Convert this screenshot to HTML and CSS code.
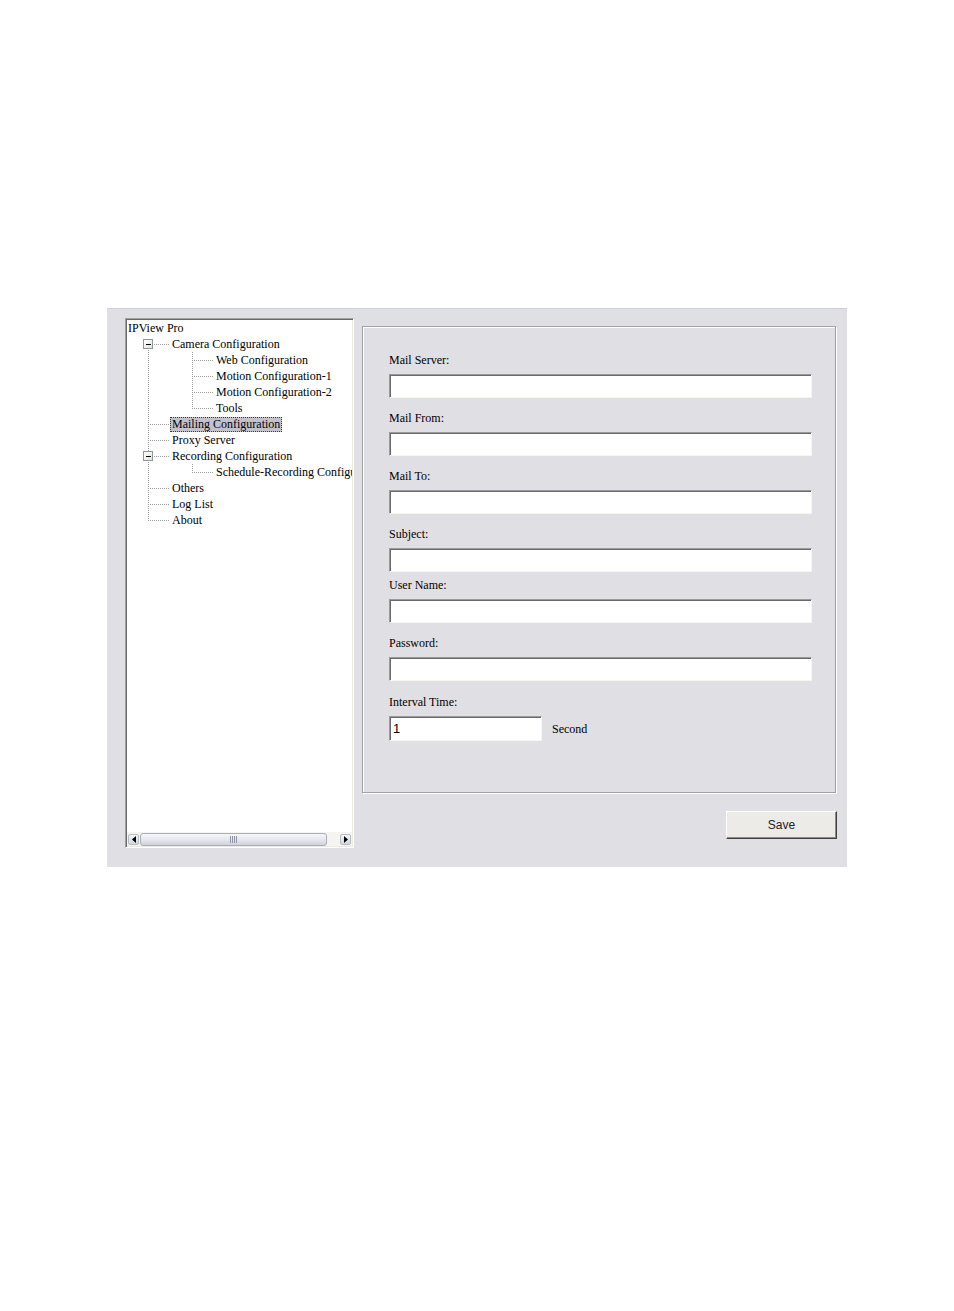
FILE: index.html
```html
<!DOCTYPE html>
<html>
<head>
<meta charset="utf-8">
<title>IPView Pro - Mailing Configuration</title>
<link rel="stylesheet" href="styles.css">
</head>
<body>
<div class="panel">
  <div class="tree">
    <div class="tree-body">
      <div class="row"><span class="node">IPView Pro</span></div>
      <div class="row"><span class="cell first"><span class="exp"></span></span><span class="node">Camera Configuration</span></div>
      <div class="row"><span class="cell pipe"></span><span class="cell tee"></span><span class="node">Web Configuration</span></div>
      <div class="row"><span class="cell pipe"></span><span class="cell tee"></span><span class="node">Motion Configuration-1</span></div>
      <div class="row"><span class="cell pipe"></span><span class="cell tee"></span><span class="node">Motion Configuration-2</span></div>
      <div class="row"><span class="cell pipe"></span><span class="cell last"></span><span class="node">Tools</span></div>
      <div class="row"><span class="cell tee"></span><span class="node selected">Mailing Configuration</span></div>
      <div class="row"><span class="cell tee"></span><span class="node">Proxy Server</span></div>
      <div class="row"><span class="cell tee"><span class="exp"></span></span><span class="node">Recording Configuration</span></div>
      <div class="row"><span class="cell pipe"></span><span class="cell last"></span><span class="node">Schedule-Recording Configuration</span></div>
      <div class="row"><span class="cell tee"></span><span class="node">Others</span></div>
      <div class="row"><span class="cell tee"></span><span class="node">Log List</span></div>
      <div class="row"><span class="cell last"></span><span class="node">About</span></div>
    </div>
    <div class="hscroll">
      <span class="sb-btn"><svg width="6" height="7" viewBox="0 0 6 7"><polygon points="5,0 5,7 1,3.5" fill="#000"/></svg></span>
      <span class="sb-track"><span class="sb-thumb"><span class="grip"></span></span></span>
      <span class="sb-btn"><svg width="6" height="7" viewBox="0 0 6 7"><polygon points="1,0 1,7 5,3.5" fill="#000"/></svg></span>
    </div>
  </div>

  <div class="main">
    <div class="group">
      <div class="field">
        <div class="label">Mail Server:</div>
        <div class="input"></div>
      </div>
      <div class="field">
        <div class="label">Mail From:</div>
        <div class="input"></div>
      </div>
      <div class="field">
        <div class="label">Mail To:</div>
        <div class="input"></div>
      </div>
      <div class="field">
        <div class="label">Subject:</div>
        <div class="input"></div>
      </div>
      <div class="field field-tight">
        <div class="label">User Name:</div>
        <div class="input"></div>
      </div>
      <div class="field">
        <div class="label">Password:</div>
        <div class="input"></div>
      </div>
      <div class="field field-loose">
        <div class="label">Interval Time:</div>
        <div class="interval">
          <div class="input input-short"><span class="value">1</span></div>
          <span class="unit">Second</span>
        </div>
      </div>
    </div>
    <div class="actions">
      <div class="button">Save</div>
    </div>
  </div>
</div>
</body>
</html>
```

FILE: styles.css
```css
html, body {
  margin: 0;
  padding: 0;
  background: #ffffff;
}

body {
  font-family: "Liberation Serif", "Times New Roman", serif;
  font-size: 12px;
  color: #000;
}

.panel {
  margin: 308px 0 0 107px;
  width: 740px;
  height: 559px;
  box-sizing: border-box;
  border-top: 1px solid #c9d1dc;
  background: #e0dfe3;
  display: flex;
  align-items: flex-start;
  padding: 9px 0 0 18px;
  gap: 8px;
}

/* ---------- tree ---------- */
.tree {
  width: 229px;
  height: 530px;
  box-sizing: border-box;
  border: 1px solid;
  border-color: #a0a0a0 #ffffff #ffffff #a0a0a0;
  box-shadow: inset 1px 1px 0 #696969, inset -1px -1px 0 #ece9e0;
  background: #ffffff;
  display: flex;
  flex-direction: column;
  padding: 1px;
}

.tree-body {
  flex: 1;
  overflow: hidden;
  white-space: nowrap;
}

.row {
  display: flex;
  height: 16px;
  align-items: center;
}

.cell {
  flex: 0 0 44px;
  height: 16px;
  display: flex;
  align-items: center;
  background-repeat: no-repeat;
}

.pipe {
  background-image: repeating-linear-gradient(to bottom, #a0a0a0 0 1px, transparent 1px 2px);
  background-size: 1px 16px;
  background-position: 21px 0;
}

.tee {
  background-image:
    repeating-linear-gradient(to bottom, #a0a0a0 0 1px, transparent 1px 2px),
    repeating-linear-gradient(to right, #a0a0a0 0 1px, transparent 1px 2px);
  background-size: 1px 16px, 21px 1px;
  background-position: 21px 0, 21px 8px;
}

.last {
  background-image:
    repeating-linear-gradient(to bottom, #a0a0a0 0 1px, transparent 1px 2px),
    repeating-linear-gradient(to right, #a0a0a0 0 1px, transparent 1px 2px);
  background-size: 1px 9px, 21px 1px;
  background-position: 21px 0, 21px 8px;
}

.first {
  background-image:
    repeating-linear-gradient(to bottom, #a0a0a0 0 1px, transparent 1px 2px),
    repeating-linear-gradient(to right, #a0a0a0 0 1px, transparent 1px 2px);
  background-size: 1px 8px, 21px 1px;
  background-position: 21px 8px, 21px 8px;
}

.exp {
  width: 10px;
  height: 10px;
  margin-left: 16px;
  box-sizing: border-box;
  border: 1px solid #8a969a;
  background: linear-gradient(#000, #000) center / 5px 1px no-repeat, linear-gradient(135deg, #ffffff, #e4e2da);
}

.node {
  margin-left: -1px;
  padding: 0 1px;
  border: 1px dotted transparent;
  line-height: 13px;
  height: 13px;
}

.selected {
  background: #c3c2cc;
  border-color: #3a3a3a;
}

.hscroll {
  flex: 0 0 14px;
  display: flex;
  align-items: center;
  gap: 1px;
  padding: 0 1px;
  background: #f5f4ef;
}

.sb-btn {
  width: 11px;
  height: 11px;
  box-sizing: border-box;
  border: 1px solid #b8bcc8;
  border-radius: 2px;
  background: linear-gradient(#f4f5f8, #d3d6de);
  display: flex;
  align-items: center;
  justify-content: center;
}

.sb-track {
  flex: 1;
  height: 13px;
  display: flex;
  padding-right: 12px;
}

.sb-thumb {
  flex: 1;
  box-sizing: border-box;
  border: 1px solid #a9adb8;
  border-radius: 3px;
  background: linear-gradient(#f6f7fa, #e2e4ec 60%, #cfd2dc);
  display: flex;
  align-items: center;
  justify-content: center;
}

.grip {
  width: 8px;
  height: 7px;
  background: repeating-linear-gradient(to right, #8e94a4 0 1px, transparent 1px 2px);
}

/* ---------- main ---------- */
.main {
  width: 475px;
  display: flex;
  flex-direction: column;
  margin-top: 8px;
}

.group {
  width: 474px;
  height: 467px;
  box-sizing: border-box;
  border: 1px solid #a2a1a6;
  box-shadow: inset 1px 1px 0 #ffffff, 1px 1px 0 #ffffff;
  padding: 26px 0 0 26px;
  display: flex;
  flex-direction: column;
  gap: 13px;
}

.field {
  display: flex;
  flex-direction: column;
  gap: 7px;
}

.field-tight {
  margin-top: -7px;
}

.field-loose {
  margin-top: 1px;
}

.label {
  height: 14px;
  line-height: 14px;
}

.input {
  width: 423px;
  height: 24px;
  box-sizing: border-box;
  border: 1px solid;
  border-color: #9a9a9a #f7f6ee #f7f6ee #9a9a9a;
  box-shadow: inset 1px 1px 0 #6a6a6a;
  background: #ffffff;
}

.interval {
  display: flex;
  align-items: center;
  gap: 10px;
}

.input-short {
  width: 153px;
  height: 25px;
  display: flex;
  align-items: center;
  padding-left: 3px;
}

.value {
  font-family: "Liberation Sans", Arial, sans-serif;
  font-size: 13px;
}

.unit {
  padding-top: 2px;
}

.actions {
  display: flex;
  justify-content: flex-end;
  margin-top: 18px;
}

.button {
  width: 111px;
  height: 28px;
  box-sizing: border-box;
  border: 1px solid;
  border-color: #ffffff #404040 #404040 #ffffff;
  box-shadow: inset -1px -1px 0 #8a8a8a;
  background: #ecebe8;
  display: flex;
  align-items: center;
  justify-content: center;
  font-family: "Liberation Sans", Arial, sans-serif;
  font-size: 12px;
  color: #222;
}
```
